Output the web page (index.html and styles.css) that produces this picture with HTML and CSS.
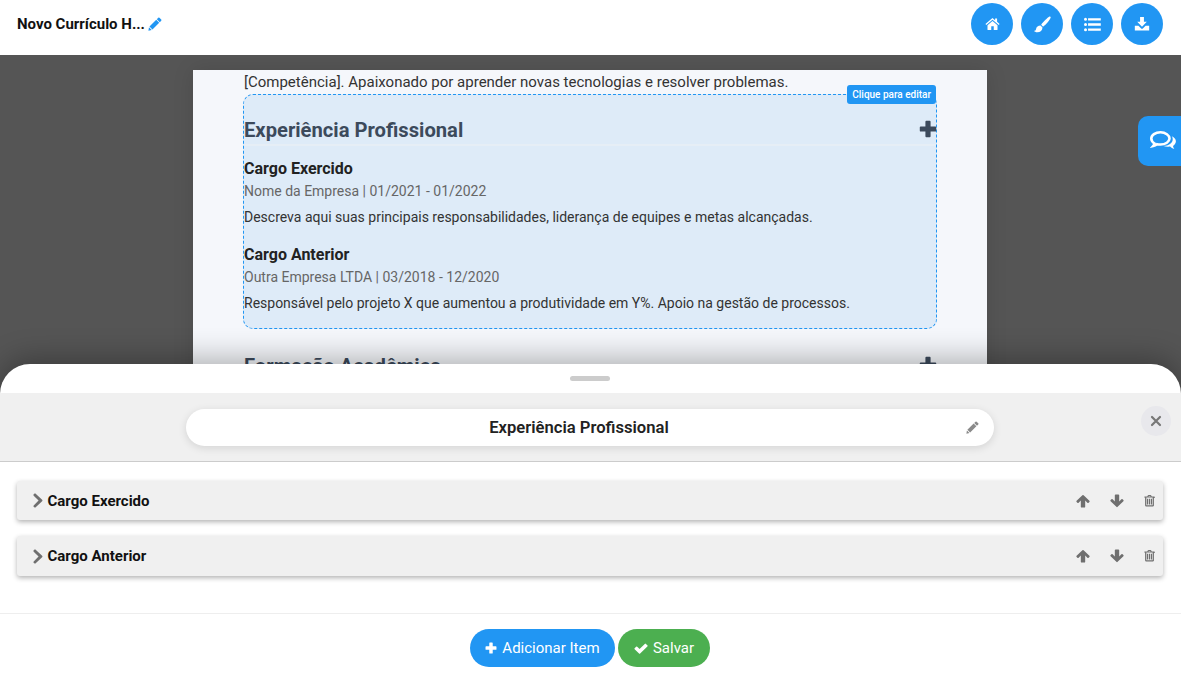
FILE: index.html
```html
<!DOCTYPE html>
<html lang="pt-BR">
<head>
<meta charset="utf-8">
<title>Novo Currículo</title>
<link rel="stylesheet" href="styles.css">
</head>
<body>
<svg class="sprites" width="0" height="0" aria-hidden="true">
  <symbol id="i-pencil" viewBox="0 0 16 16"><path d="M11.700.9a1 1 0 0 1 1.400 0l2 2a1 1 0 0 1 0 1.400L13.500 5.900 10.100 2.500zM9.400 3.200l3.400 3.400-7.700 7.700-3.400-3.400zM1.100 11.700l3.200 3.200-3.800.8z"/></symbol>
  <symbol id="i-plus" viewBox="0 0 16 16"><path d="M5.700 1.500a.8.800 0 0 1 .8-.8h3a.8.800 0 0 1 .8.8v4.200h4.200a.8.800 0 0 1 .8.8v3a.8.800 0 0 1-.8.8h-4.200v4.200a.8.800 0 0 1-.8.8h-3a.8.800 0 0 1-.8-.8v-4.200H1.500a.8.800 0 0 1-.8-.8v-3a.8.800 0 0 1 .8-.8h4.200z"/></symbol>
  <symbol id="i-chevron" viewBox="0 0 10 16"><path d="M2.500.7 9.400 7.200a1 1 0 0 1 0 1.500L2.500 15.300a1 1 0 0 1-1.400 0L.4 14.600a1 1 0 0 1 0-1.400L5.600 8 .4 2.800a1 1 0 0 1 0-1.400L1.100.7a1 1 0 0 1 1.400 0z"/></symbol>
  <symbol id="i-up" viewBox="0 0 16 16"><path d="M8 1a1 1 0 0 1 .7.300l6.600 6.400a1 1 0 0 1 0 1.400l-.9.900a1 1 0 0 1-1.400 0l-2.500-2.500V14.500a1 1 0 0 1-1 1H6.500a1 1 0 0 1-1-1V7.500L3 10a1 1 0 0 1-1.400 0l-.9-.9a1 1 0 0 1 0-1.400l6.600-6.400A1 1 0 0 1 8 1z"/></symbol>
  <symbol id="i-down" viewBox="0 0 16 16"><path d="M8 15a1 1 0 0 0 .7-.3l6.600-6.400a1 1 0 0 0 0-1.400l-.9-.9a1 1 0 0 0-1.400 0L10.500 8.500V1.500a1 1 0 0 0-1-1H6.500a1 1 0 0 0-1 1v7L3 6a1 1 0 0 0-1.400 0l-.9.9a1 1 0 0 0 0 1.400l6.600 6.400A1 1 0 0 0 8 15z"/></symbol>
  <symbol id="i-trash" viewBox="0 0 14 16"><path fill-rule="evenodd" d="M4.100 2.300 4.800 1A1 1 0 0 1 5.700.4h2.600a1 1 0 0 1 .9.600l.7 1.300h3.300a.5.5 0 0 1 .5.500v1.400h-1.100v9.800A1.500 1.500 0 0 1 11.100 15H2.900a1.500 1.500 0 0 1-1.500-1.500V3.700H.3V2.800a.5.5 0 0 1 .5-.5zM5.700 2.300h2.600l-.4-.7H6.100zM3 3.700v9.700h8V3.700z"/><path d="M3.800 5.200h1.500v7.200H3.800zM6.250 5.200h1.500v7.200H6.250zM8.700 5.200h1.500v7.200H8.700z"/></symbol>
</svg>

<header class="topbar">
  <div class="doc-title">
    <span>Novo Currículo H...</span>
    <svg class="icon doc-pencil"><use href="#i-pencil"/></svg>
  </div>
  <nav class="top-actions">
    <button class="round-btn" aria-label="Início">
      <svg class="home" viewBox="0 0 18 16"><path d="M9 .8.500 8l1 1.200L9 2.900l7.500 6.300 1-1.200-3-2.600V1.500h-2.400v1.900zM3 9.400 9 4.400l6 5V14.500a.7.7 0 0 1-.7.700h-3.800v-4.400h-3v4.400H3.700a.7.7 0 0 1-.7-.7z"/></svg>
    </button>
    <button class="round-btn" aria-label="Estilo">
      <svg viewBox="0 0 18 18"><path d="M16.400.4c.8 0 1.400.6 1.300 1.300-.1.900-1.600 3.300-3.400 5.300-1.600 1.800-3.300 3.500-4.700 4.300L7.600 9.200c.9-1.500 2.600-3.400 4.300-5C13.500 2.700 15.600.5 16.400.4zM6.900 10l2.100 2.100c-.1 3.100-2.200 5.200-5.500 5.200-1.600 0-2.900-.6-3.500-1.600 1.300 0 2-.7 2.200-2 .3-2.200 2.200-3.700 4.700-3.700z"/></svg>
    </button>
    <button class="round-btn" aria-label="Seções">
      <svg viewBox="0 0 18 16"><path d="M0 2.500a1.600 1.600 0 1 1 3.200 0 1.600 1.600 0 0 1-3.200 0zM0 8a1.600 1.600 0 1 1 3.200 0A1.600 1.600 0 0 1 0 8zm0 5.500a1.600 1.600 0 1 1 3.200 0 1.600 1.600 0 0 1-3.200 0zM4.300 1.300h13.500v2.400H4.300zm0 5.500h13.500v2.400H4.300zm0 5.500h13.500v2.400H4.300z"/></svg>
    </button>
    <button class="round-btn" aria-label="Baixar">
      <svg class="download" viewBox="0 0 18 16"><path d="M6.800 0h4.400v5.400h3.300L9 11 3.500 5.400h3.300zM.8 10h4.100L7.800 12.800a1.700 1.700 0 0 0 2.400 0L13.100 10h4.100v5.500H.8z"/></svg>
    </button>
  </nav>
</header>

<main class="stage">
  <article class="paper">
    <p class="summary">[Competência]. Apaixonado por aprender novas tecnologias e resolver problemas.</p>
    <section class="resume-section selected">
      <span class="edit-badge">Clique para editar</span>
      <div class="section-head">
        <h2>Experiência Profissional</h2>
        <svg class="icon head-plus"><use href="#i-plus"/></svg>
      </div>
      <div class="job">
        <h3>Cargo Exercido</h3>
        <p class="job-meta">Nome da Empresa | 01/2021 - 01/2022</p>
        <p class="job-desc">Descreva aqui suas principais responsabilidades, liderança de equipes e metas alcançadas.</p>
      </div>
      <div class="job">
        <h3>Cargo Anterior</h3>
        <p class="job-meta">Outra Empresa LTDA | 03/2018 - 12/2020</p>
        <p class="job-desc">Responsável pelo projeto X que aumentou a produtividade em Y%. Apoio na gestão de processos.</p>
      </div>
    </section>
    <section class="resume-section next">
      <div class="section-head">
        <h2>Formação Acadêmica</h2>
        <svg class="icon head-plus"><use href="#i-plus"/></svg>
      </div>
    </section>
  </article>
</main>

<button class="chat-tab" aria-label="Comentários">
  <svg viewBox="0 0 26 20" fill="none" stroke="#fff"><path stroke-width="2.600" d="M10.500 1.300C5.300 1.300 1.300 4 1.300 7.600c0 2 1.200 3.700 3.200 4.900-.2 1-.7 1.800-1.300 2.500 1.500-.3 2.800-1 3.800-1.800 1 .2 2.300.3 3.500.3 5 0 9-2.700 9-5.900s-4-6.300-9-6.300z"/><path fill="#fff" stroke="none" d="M21.800 5.200c2.600 1.100 4.100 3 4.100 5.100 0 1.900-1.100 3.500-2.900 4.600.1.900.6 1.800 1.300 3-1.700-.4-3.200-1.300-4.200-2.300-.8.100-1.600.2-2.400.1-1.500 0-2.900-.3-4.100-.8 5-.2 9.100-2.900 9.100-6.500 0-1.200-.2-2.200-.9-3.200z"/></svg>
</button>

<aside class="sheet">
  <div class="handle"></div>
  <div class="sheet-head">
    <div class="title-pill">
      <span>Experiência Profissional</span>
      <svg class="icon pill-pencil"><use href="#i-pencil"/></svg>
    </div>
    <button class="close-btn" aria-label="Fechar">
      <svg viewBox="0 0 12 12"><path d="M2 2l8 8M10 2l-8 8" stroke="#777" stroke-width="2.200" stroke-linecap="round" fill="none"/></svg>
    </button>
  </div>
  <div class="item-list">
    <div class="item">
      <svg class="icon chevron"><use href="#i-chevron"/></svg>
      <span class="item-name">Cargo Exercido</span>
      <div class="item-tools">
        <svg class="icon tool"><use href="#i-up"/></svg>
        <svg class="icon tool"><use href="#i-down"/></svg>
        <svg class="icon tool trash"><use href="#i-trash"/></svg>
      </div>
    </div>
    <div class="item">
      <svg class="icon chevron"><use href="#i-chevron"/></svg>
      <span class="item-name">Cargo Anterior</span>
      <div class="item-tools">
        <svg class="icon tool"><use href="#i-up"/></svg>
        <svg class="icon tool"><use href="#i-down"/></svg>
        <svg class="icon tool trash"><use href="#i-trash"/></svg>
      </div>
    </div>
  </div>
  <div class="sheet-foot">
    <button class="pill-btn blue"><svg class="icon"><use href="#i-plus"/></svg>Adicionar Item</button>
    <button class="pill-btn green">
      <svg class="icon check" viewBox="0 0 16 14"><path d="M.6 7.300l1.700-1.700a.9.900 0 0 1 1.300 0L6.300 8.300 12.400 2.200a.9.900 0 0 1 1.300 0l1.700 1.700a.9.900 0 0 1 0 1.300L7 13.500a.9.900 0 0 1-1.300 0L.6 8.600a.9.900 0 0 1 0-1.300z"/></svg>Salvar
    </button>
  </div>
</aside>
</body>
</html>
```
FILE: styles.css
```css
* { box-sizing: border-box; }
html, body { margin: 0; height: 100%; overflow: hidden; }
body {
  position: relative;
  width: 1181px;
  height: 675px;
  display: flex;
  flex-direction: column;
  font-family: Roboto, "Liberation Sans", sans-serif;
  color: #212529;
  background: #555;
}
.sprites { position: absolute; }
button { font-family: inherit; border: 0; padding: 0; cursor: pointer; }
h2, h3, p { margin: 0; }
.icon { display: block; fill: currentColor; }

.topbar {
  flex: none;
  height: 55px;
  background: #fff;
  display: flex;
  align-items: center;
  justify-content: space-between;
  padding: 0 18px 7px 17px;
}
.doc-title {
  display: flex;
  align-items: center;
  gap: 3px;
  font-size: 15px;
  font-weight: 700;
  color: #111;
}
.doc-pencil { width: 14px; height: 14px; color: #2196f3; }
.top-actions { display: flex; gap: 8px; }
.round-btn {
  width: 42px;
  height: 42px;
  border-radius: 50%;
  background: #2196f3;
  display: flex;
  align-items: center;
  justify-content: center;
}
.round-btn svg { width: 17px; height: 17px; fill: #fff; }
.round-btn .home { width: 15px; height: 14px; }
.round-btn .download { width: 16px; height: 14px; }

.stage {
  flex: 1;
  min-height: 0;
  padding: 15px 1px 0 0;
  display: flex;
  justify-content: center;
  background: #555;
  overflow: hidden;
}
.paper {
  width: 794px;
  height: 400px;
  padding: 0 50px;
  background: #f5f7fb;
  box-shadow: 0 0 20px rgba(0, 0, 0, .12);
}
.summary {
  height: 25px;
  padding: 3px 1px 0;
  font-size: 15px;
  line-height: 19px;
  color: #333;
}
.resume-section { position: relative; }
.resume-section.selected {
  height: 235px;
  margin-top: -1px;
  border: 1px dashed #2196f3;
  border-radius: 10px;
  background: #deebf8;
}
.edit-badge {
  position: absolute;
  top: -10px;
  right: 0;
  height: 19px;
  padding: 0 5px;
  border-radius: 3px;
  background: #2196f3;
  color: #fff;
  font-size: 10px;
  font-weight: 500;
  line-height: 19px;
}
.section-head {
  height: 51px;
  display: flex;
  align-items: center;
  justify-content: space-between;
  border-bottom: 2px solid #e6eef6;
  padding-top: 20px;
}
.section-head h2 {
  font-size: 20.2px;
  font-weight: 700;
  color: #3c4a5c;
  line-height: 30px;
}
.head-plus { width: 18px; height: 18px; color: #3c4a5c; margin: -2px -1px 0 0; }
.job { height: 86px; padding-top: 12px; }
.job h3 { font-size: 16px; font-weight: 700; line-height: 22px; color: #222; }
.job-meta { font-size: 14px; line-height: 23px; color: #666; }
.job-desc { font-size: 14px; line-height: 29px; color: #333; }
.resume-section.next { padding: 0 1px; }
.resume-section.next .section-head { border: 0; height: 58px; padding-top: 16px; }

.chat-tab {
  position: absolute;
  top: 116px;
  right: 0;
  width: 43px;
  height: 50px;
  padding-left: 6px;
  border-radius: 10px 0 0 10px;
  background: #2196f3;
  display: flex;
  align-items: center;
  justify-content: center;
}
.chat-tab svg { width: 26px; height: 20px; }

.sheet {
  position: absolute;
  left: 0;
  right: 0;
  bottom: 0;
  height: 311px;
  border-radius: 30px 30px 0 0;
  background: #fff;
  box-shadow: 0 -5px 30px rgba(0, 0, 0, .3);
  display: flex;
  flex-direction: column;
}
.handle {
  flex: none;
  width: 40px;
  height: 5px;
  margin: 12px auto;
  position: relative;
  left: -1px;
  border-radius: 3px;
  background: #ccc;
}
.sheet-head {
  position: relative;
  flex: none;
  height: 69px;
  padding: 16px 1px 0 0;
  background: #f0f0f0;
  border-bottom: 1px solid #ccc;
  display: flex;
  justify-content: center;
}
.title-pill {
  position: relative;
  width: 808px;
  height: 37px;
  padding: 0 22px 0 0;
  border-radius: 19px;
  background: #fff;
  box-shadow: 0 2px 8px rgba(0, 0, 0, .12);
  display: flex;
  align-items: center;
  justify-content: center;
  font-size: 16.6px;
  font-weight: 600;
  color: #222;
}
.pill-pencil {
  position: absolute;
  right: 15px;
  top: 12px;
  width: 13px;
  height: 13px;
  color: #8a8a8a;
}
.close-btn {
  position: absolute;
  top: 13px;
  right: 10px;
  width: 30px;
  height: 30px;
  border-radius: 50%;
  background: #e8e8ec;
  display: flex;
  align-items: center;
  justify-content: center;
}
.close-btn svg { width: 12px; height: 12px; }

.item-list {
  flex: 1;
  padding: 19px 18px 0 17px;
  display: flex;
  flex-direction: column;
  gap: 16px;
}
.item {
  height: 39px;
  padding: 0 8px 0 16px;
  background: #f0f0f0;
  border-radius: 3px;
  box-shadow: 0 2px 5px rgba(0, 0, 0, .3);
  display: flex;
  align-items: center;
}
.item + .item { height: 40px; }
.chevron { width: 10px; height: 15px; color: #6f6f6f; }
.item-name {
  margin-left: 4.5px;
  font-size: 15px;
  font-weight: 700;
  color: #111;
}
.item-tools { margin-left: auto; display: flex; align-items: center; gap: 20px; }
.tool { width: 14px; height: 14px; color: #6f6f6f; }
.tool.trash { width: 11px; height: 14px; }
.sheet-foot {
  flex: none;
  height: 62px;
  border-top: 1px solid #eee;
  display: flex;
  justify-content: center;
  gap: 3px;
  padding: 15px 1px 0 0;
}
.pill-btn {
  height: 38px;
  border-radius: 19px;
  color: #fff;
  font-size: 15px;
  font-weight: 400;
  display: flex;
  align-items: center;
  justify-content: center;
  gap: 5px;
}
.pill-btn .icon { width: 12px; height: 12px; }
.pill-btn .check { width: 14px; }
.blue { width: 145px; background: #2196f3; }
.green { width: 92px; background: #4caf50; }
```
